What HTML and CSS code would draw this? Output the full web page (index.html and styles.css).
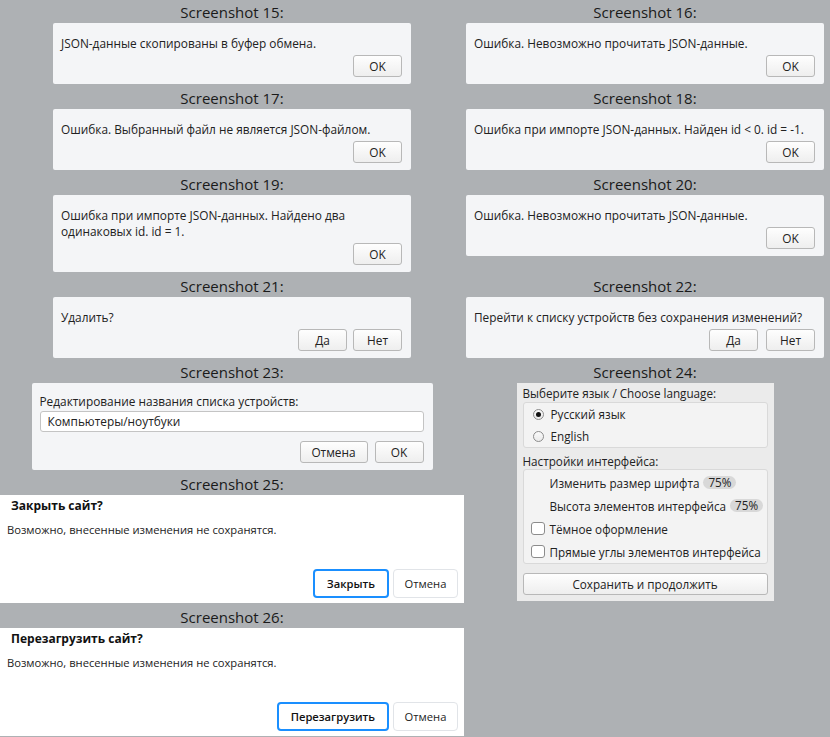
FILE: index.html
```html
<!DOCTYPE html>
<html lang="ru">
<head>
<meta charset="utf-8">
<title>Screenshots</title>
<link rel="stylesheet" href="styles.css">
</head>
<body>
<div class="grid">
  <section class="cell">
    <h2 class="title">Screenshot 15:</h2>
    <div class="dlg">
      <p class="msg">JSON-данные скопированы в буфер обмена.</p>
      <div class="actions"><button class="btn">OK</button></div>
    </div>
  </section>
  <section class="cell">
    <h2 class="title">Screenshot 16:</h2>
    <div class="dlg">
      <p class="msg">Ошибка. Невозможно прочитать JSON-данные.</p>
      <div class="actions"><button class="btn">OK</button></div>
    </div>
  </section>
  <section class="cell">
    <h2 class="title">Screenshot 17:</h2>
    <div class="dlg">
      <p class="msg">Ошибка. Выбранный файл не является JSON-файлом.</p>
      <div class="actions"><button class="btn">OK</button></div>
    </div>
  </section>
  <section class="cell">
    <h2 class="title">Screenshot 18:</h2>
    <div class="dlg">
      <p class="msg">Ошибка при импорте JSON-данных. Найден id &lt; 0. id = -1.</p>
      <div class="actions"><button class="btn">OK</button></div>
    </div>
  </section>
  <section class="cell">
    <h2 class="title">Screenshot 19:</h2>
    <div class="dlg">
      <p class="msg">Ошибка при импорте JSON-данных. Найдено два<br>одинаковых id. id = 1.</p>
      <div class="actions"><button class="btn">OK</button></div>
    </div>
  </section>
  <section class="cell">
    <h2 class="title">Screenshot 20:</h2>
    <div class="dlg">
      <p class="msg">Ошибка. Невозможно прочитать JSON-данные.</p>
      <div class="actions"><button class="btn">OK</button></div>
    </div>
  </section>
  <section class="cell">
    <h2 class="title">Screenshot 21:</h2>
    <div class="dlg">
      <p class="msg">Удалить?</p>
      <div class="actions"><button class="btn">Да</button><button class="btn">Нет</button></div>
    </div>
  </section>
  <section class="cell">
    <h2 class="title">Screenshot 22:</h2>
    <div class="dlg">
      <p class="msg">Перейти к списку устройств без сохранения изменений?</p>
      <div class="actions actions-wide"><button class="btn">Да</button><button class="btn">Нет</button></div>
    </div>
  </section>
  <section class="cell">
    <h2 class="title">Screenshot 23:</h2>
    <div class="dlg dlg-edit">
      <p class="msg">Редактирование названия списка устройств:</p>
      <div class="input">Компьютеры/ноутбуки</div>
      <div class="actions actions-edit"><button class="btn btn-cancel">Отмена</button><button class="btn">OK</button></div>
    </div>
  </section>
  <section class="cell cell-span">
    <h2 class="title">Screenshot 24:</h2>
    <div class="panel">
      <div class="plabel">Выберите язык / Choose language:</div>
      <div class="group group-lang">
        <div class="row"><span class="radio checked"></span>Русский язык</div>
        <div class="row"><span class="radio"></span>English</div>
      </div>
      <div class="plabel plabel-2">Настройки интерфейса:</div>
      <div class="group group-ui">
        <div class="row"><span class="spacer"></span>Изменить размер шрифта<span class="badge">75%</span></div>
        <div class="row"><span class="spacer"></span>Высота элементов интерфейса<span class="badge">75%</span></div>
        <div class="row"><span class="check"></span>Тёмное оформление</div>
        <div class="row"><span class="check"></span>Прямые углы элементов интерфейса</div>
      </div>
      <button class="btn btn-save">Сохранить и продолжить</button>
    </div>
  </section>
  <section class="cell cell-full">
    <h2 class="title">Screenshot 25:</h2>
    <div class="web">
      <h3 class="web-title">Закрыть сайт?</h3>
      <p class="web-text">Возможно, внесенные изменения не сохранятся.</p>
      <div class="web-actions"><button class="wbtn wbtn-primary">Закрыть</button><button class="wbtn">Отмена</button></div>
    </div>
  </section>
  <section class="cell cell-full">
    <h2 class="title">Screenshot 26:</h2>
    <div class="web">
      <h3 class="web-title">Перезагрузить сайт?</h3>
      <p class="web-text">Возможно, внесенные изменения не сохранятся.</p>
      <div class="web-actions"><button class="wbtn wbtn-primary">Перезагрузить</button><button class="wbtn">Отмена</button></div>
    </div>
  </section>
</div>
</body>
</html>
```
FILE: styles.css
```css
html, body {
  margin: 0;
  padding: 0;
  background: #aeb1b4;
  font-family: "Open Sans", "Noto Sans", sans-serif;
  color: #222;
  overflow: hidden;
}

.grid {
  display: grid;
  grid-template-columns: 464px 358px;
  column-gap: 2px;
  row-gap: 4px;
  padding-top: 2px;
  align-items: start;
}

.cell {
  display: flex;
  flex-direction: column;
  align-items: center;
}

.cell-span {
  grid-row: span 2;
}

.cell-full {
  align-items: stretch;
}

.title {
  margin: 0;
  height: 21px;
  font-size: 15px;
  line-height: 20px;
  font-weight: 400;
  color: #1a1a1a;
  text-align: center;
}

.dlg {
  width: 358px;
  box-sizing: border-box;
  background: #f4f5f7;
  border-radius: 2px;
  padding: 12px 9px 7px 8px;
  font-size: 11.85px;
  line-height: 16px;
}

.msg {
  margin: 0;
}

.actions {
  display: flex;
  justify-content: flex-end;
  gap: 6px;
  margin-top: 4px;
}

.actions-wide {
  gap: 8px;
}

.btn {
  height: 22px;
  min-width: 49px;
  box-sizing: border-box;
  padding: 0 8px;
  border: 1px solid #b8b8b8;
  border-radius: 3px;
  background: linear-gradient(#fefefe, #eeeeee);
  font: inherit;
  font-size: 11.85px;
  color: #222;
}

.dlg-edit {
  width: 401px;
  padding-top: 10px;
}

.input {
  margin-top: 2px;
  height: 21px;
  box-sizing: border-box;
  border: 1px solid #c4c4c4;
  border-radius: 3px;
  background: #fff;
  padding: 0 7px;
  line-height: 19px;
}

.actions-edit {
  margin-top: 9px;
  gap: 7px;
}

.btn-cancel {
  min-width: 68px;
}

/* Screenshot 24 */
.panel {
  width: 257px;
  box-sizing: border-box;
  background: #ebebeb;
  padding: 2px 6px 6px;
  font-size: 11.7px;
  line-height: 16px;
}

.plabel-2 {
  margin-top: 5px;
}

.group {
  margin-top: 1px;
  border: 1px solid #d9d9d9;
  border-radius: 3px;
  background: #f3f3f3;
}

.group-lang .row {
  height: 22px;
}

.group-ui {
  margin-top: 0;
  padding-top: 1px;
}

.group-ui .row {
  height: 23px;
}

.row {
  display: flex;
  align-items: center;
  padding-left: 8px;
}

.radio {
  position: relative;
  width: 11px;
  height: 11px;
  box-sizing: border-box;
  border: 1px solid #8c8c8c;
  border-radius: 50%;
  background: linear-gradient(#fafafa, #eaeaea);
  margin-right: 7px;
  margin-left: 1px;
}

.radio.checked::after {
  content: "";
  position: absolute;
  left: 2px;
  top: 2px;
  width: 5px;
  height: 5px;
  border-radius: 50%;
  background: #111;
}

.check {
  width: 14px;
  height: 13px;
  box-sizing: border-box;
  border: 1px solid #8c8c8c;
  border-radius: 3px;
  background: #fff;
  margin-right: 5px;
  margin-left: -1px;
}

.spacer {
  width: 18px;
}

.badge {
  margin-left: 4px;
  padding: 0 5px;
  height: 13px;
  line-height: 13px;
  border-radius: 7px;
  background: #d8d8d8;
  font-size: 11.7px;
}

.btn-save {
  display: block;
  width: 100%;
  margin-top: 9px;
  font-size: 11.7px;
}

/* Screenshots 25 / 26 */
.web {
  height: 108px;
  box-sizing: border-box;
  background: #fff;
  padding: 3px 6px 5px 7px;
  display: flex;
  flex-direction: column;
}

.web-title {
  margin: 0;
  padding-left: 4px;
  font-size: 12px;
  line-height: 16px;
  font-weight: 700;
  color: #111;
}

.web-text {
  margin: 8px 0 0;
  font-size: 11.2px;
  line-height: 16px;
  color: #222;
}

.web-actions {
  margin-top: auto;
  display: flex;
  justify-content: flex-end;
  gap: 4px;
}

.wbtn {
  height: 29px;
  min-width: 65px;
  box-sizing: border-box;
  padding: 0 10px;
  border: 1px solid #e1e4e8;
  border-radius: 4px;
  background: #fff;
  font: inherit;
  font-size: 11.2px;
  color: #222;
}

.wbtn-primary {
  border: 2px solid #1a8fff;
  font-weight: 600;
  color: #111;
  padding: 0 12px;
}
```
